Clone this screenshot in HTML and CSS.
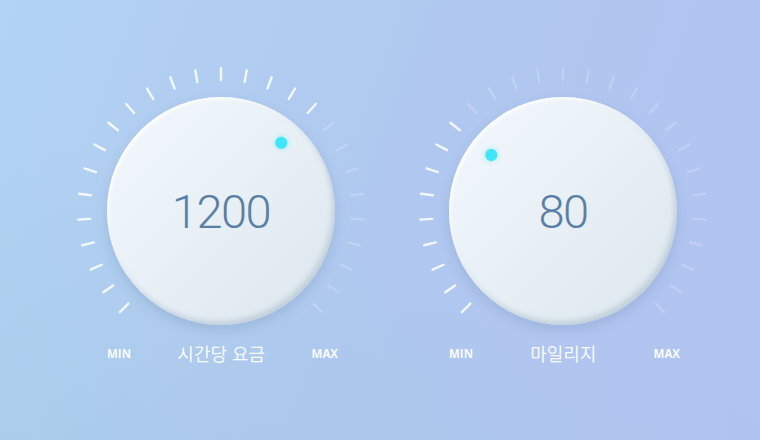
FILE: index.html
```html
<!DOCTYPE html>
<html lang="ko">
<head>
<meta charset="utf-8">
<title>Knobs</title>
<link rel="stylesheet" href="styles.css">
</head>
<body>
<main class="page">
  <section class="widget">
    <div class="dial">
      <svg class="ticks" viewBox="0 0 290 290" width="290" height="290">
        <defs><line id="tick" x1="145" y1="2" x2="145" y2="14"/></defs>
        <g class="on">
          <use href="#tick" transform="rotate(-135 145 145)"/>
          <use href="#tick" transform="rotate(-124.62 145 145)"/>
          <use href="#tick" transform="rotate(-114.23 145 145)"/>
          <use href="#tick" transform="rotate(-103.85 145 145)"/>
          <use href="#tick" transform="rotate(-93.46 145 145)"/>
          <use href="#tick" transform="rotate(-83.08 145 145)"/>
          <use href="#tick" transform="rotate(-72.69 145 145)"/>
          <use href="#tick" transform="rotate(-62.31 145 145)"/>
          <use href="#tick" transform="rotate(-51.92 145 145)"/>
          <use href="#tick" transform="rotate(-41.54 145 145)"/>
          <use href="#tick" transform="rotate(-31.15 145 145)"/>
          <use href="#tick" transform="rotate(-20.77 145 145)"/>
          <use href="#tick" transform="rotate(-10.38 145 145)"/>
          <use href="#tick" transform="rotate(0 145 145)"/>
          <use href="#tick" transform="rotate(10.38 145 145)"/>
          <use href="#tick" transform="rotate(20.77 145 145)"/>
          <use href="#tick" transform="rotate(31.15 145 145)"/>
          <use href="#tick" transform="rotate(41.54 145 145)"/>
        </g>
        <g class="off">
          <use href="#tick" transform="rotate(51.92 145 145)"/>
          <use href="#tick" transform="rotate(62.31 145 145)"/>
          <use href="#tick" transform="rotate(72.69 145 145)"/>
          <use href="#tick" transform="rotate(83.08 145 145)"/>
          <use href="#tick" transform="rotate(93.46 145 145)"/>
          <use href="#tick" transform="rotate(103.85 145 145)"/>
          <use href="#tick" transform="rotate(114.23 145 145)"/>
          <use href="#tick" transform="rotate(124.62 145 145)"/>
          <use href="#tick" transform="rotate(135 145 145)"/>
        </g>
      </svg>
      <div class="knob">
        <span class="dot" style="--a:41.5deg"></span>
        <span class="value">1200</span>
      </div>
    </div>
    <div class="labels">
      <span class="end">MIN</span>
      <span class="name">시간당 요금</span>
      <span class="end">MAX</span>
    </div>
  </section>

  <section class="widget">
    <div class="dial">
      <svg class="ticks" viewBox="0 0 290 290" width="290" height="290">
        <g class="on">
          <use href="#tick" transform="rotate(-135 145 145)"/>
          <use href="#tick" transform="rotate(-124.62 145 145)"/>
          <use href="#tick" transform="rotate(-114.23 145 145)"/>
          <use href="#tick" transform="rotate(-103.85 145 145)"/>
          <use href="#tick" transform="rotate(-93.46 145 145)"/>
          <use href="#tick" transform="rotate(-83.08 145 145)"/>
          <use href="#tick" transform="rotate(-72.69 145 145)"/>
          <use href="#tick" transform="rotate(-62.31 145 145)"/>
          <use href="#tick" transform="rotate(-51.92 145 145)"/>
        </g>
        <g class="off">
          <use href="#tick" transform="rotate(-41.54 145 145)"/>
          <use href="#tick" transform="rotate(-31.15 145 145)"/>
          <use href="#tick" transform="rotate(-20.77 145 145)"/>
          <use href="#tick" transform="rotate(-10.38 145 145)"/>
          <use href="#tick" transform="rotate(0 145 145)"/>
          <use href="#tick" transform="rotate(10.38 145 145)"/>
          <use href="#tick" transform="rotate(20.77 145 145)"/>
          <use href="#tick" transform="rotate(31.15 145 145)"/>
          <use href="#tick" transform="rotate(41.54 145 145)"/>
          <use href="#tick" transform="rotate(51.92 145 145)"/>
          <use href="#tick" transform="rotate(62.31 145 145)"/>
          <use href="#tick" transform="rotate(72.69 145 145)"/>
          <use href="#tick" transform="rotate(83.08 145 145)"/>
          <use href="#tick" transform="rotate(93.46 145 145)"/>
          <use href="#tick" transform="rotate(103.85 145 145)"/>
          <use href="#tick" transform="rotate(114.23 145 145)"/>
          <use href="#tick" transform="rotate(124.62 145 145)"/>
          <use href="#tick" transform="rotate(135 145 145)"/>
        </g>
      </svg>
      <div class="knob">
        <span class="dot" style="--a:-52deg"></span>
        <span class="value">80</span>
      </div>
    </div>
    <div class="labels">
      <span class="end">MIN</span>
      <span class="name">마일리지</span>
      <span class="end">MAX</span>
    </div>
  </section>
</main>
</body>
</html>
```

FILE: styles.css
```css
html, body {
  margin: 0;
  padding: 0;
  width: 760px;
  height: 440px;
  overflow: hidden;
}

body {
  background:
    linear-gradient(20deg, rgba(160, 200, 225, 0.35) 0%, rgba(160, 200, 225, 0) 45%),
    linear-gradient(110deg, #b2d3f3 0%, #b0c8ef 50%, #b1c3f0 100%);
  font-family: Roboto, "Noto Sans", sans-serif;
}

.page {
  display: flex;
  gap: 52px;
  padding: 66px 0 0 76px;
}

.widget {
  width: 290px;
  display: flex;
  flex-direction: column;
}

.dial {
  display: grid;
  width: 290px;
  height: 290px;
  place-items: center;
}

.ticks,
.knob {
  grid-area: 1 / 1;
}

.ticks {
  display: block;
}

.ticks use {
  stroke-width: 2.4;
  stroke-linecap: round;
}

.on use {
  stroke: rgba(255, 255, 255, 0.85);
}

.off use {
  stroke: rgba(255, 255, 255, 0.2);
}

.knob {
  position: relative;
  width: 228px;
  height: 228px;
  border-radius: 50%;
  background: linear-gradient(135deg, #f3f8fd 0%, #e8f0f6 50%, #dce6ed 100%);
  box-shadow:
    0 5px 12px rgba(90, 120, 160, 0.22),
    inset -3px -4px 5px rgba(170, 188, 204, 0.55),
    inset 2px 2px 3px rgba(255, 255, 255, 0.9);
  display: flex;
  align-items: center;
  justify-content: center;
}

.value {
  font-family: Roboto, sans-serif;
  font-weight: 300;
  font-size: 47px;
  letter-spacing: -1.5px;
  color: #5a7fa7;
  line-height: 1;
}

.dot {
  position: absolute;
  left: 50%;
  top: 50%;
  width: 12px;
  height: 12px;
  margin: -6px 0 0 -6px;
  border-radius: 50%;
  background: #3ee6f8;
  box-shadow: 0 0 5px rgba(62, 230, 248, 0.55);
  transform: rotate(var(--a)) translateY(-91px);
}

.labels {
  display: grid;
  grid-template-columns: auto 1fr auto;
  align-items: center;
  height: 24px;
  margin-top: -16px;
  padding: 0 28px 0 31px;
  color: rgba(255, 255, 255, 0.95);
}

.end {
  font-family: "Open Sans", "Liberation Sans", sans-serif;
  font-weight: 700;
  font-size: 11.5px;
}

.name {
  text-align: center;
  font-family: "Noto Sans CJK KR", "Noto Sans", sans-serif;
  font-weight: 400;
  font-size: 18px;
  color: rgba(255, 255, 255, 0.92);
}
```
